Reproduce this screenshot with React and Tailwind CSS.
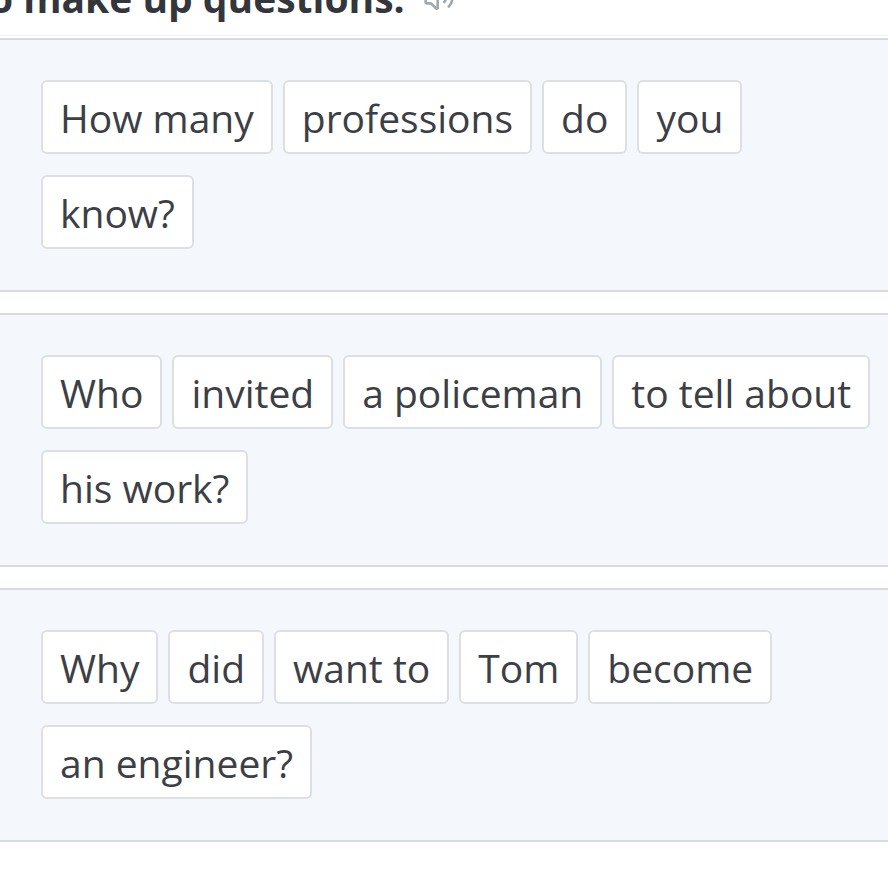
import { Volume2 } from 'lucide-react'

const questions = [
  ['How many', 'professions', 'do', 'you', 'know?'],
  ['Who', 'invited', 'a policeman', 'to tell about', 'his work?'],
  ['Why', 'did', 'want to', 'Tom', 'become', 'an engineer?'],
]

const Chip = ({ text }) => (
  <div className="h-[74px] flex items-center px-[17px] bg-white border-2 border-[#dcdfe3] rounded-[6px] text-[39px] leading-none text-[#3c4046] whitespace-nowrap">
    {text}
  </div>
)

export default function App() {
  return (
    <div className="bg-white min-h-[872px] overflow-hidden" style={{ fontFamily: '"Open Sans", sans-serif' }}>
      {/* heading, scrolled mostly out of view */}
      <div className="h-[36px] overflow-hidden border-b border-[#eef2f6]">
        <div className="flex items-center gap-[18px] -mt-[26px] -ml-[28px] whitespace-nowrap">
          <h2 className="text-[39px] leading-[48px] font-bold text-[#33373d]">to make up questions.</h2>
          <Volume2 className="w-[32px] h-[32px] text-[#a3a8ae]" strokeWidth={2} />
        </div>
      </div>

      <div className="flex flex-col gap-[21px] pt-[2px]">
        {questions.map((words, i) => (
          <div key={i} className="bg-[#f4f8fc] border-y-2 border-[#d8dbde] pt-[40px] pb-[41px] pl-[41px] pr-[12px]">
            <div className="flex flex-wrap gap-x-[10px] gap-y-[21px]">
              {words.map((w, j) => (
                <Chip key={j} text={w} />
              ))}
            </div>
          </div>
        ))}
      </div>
    </div>
  )
}
